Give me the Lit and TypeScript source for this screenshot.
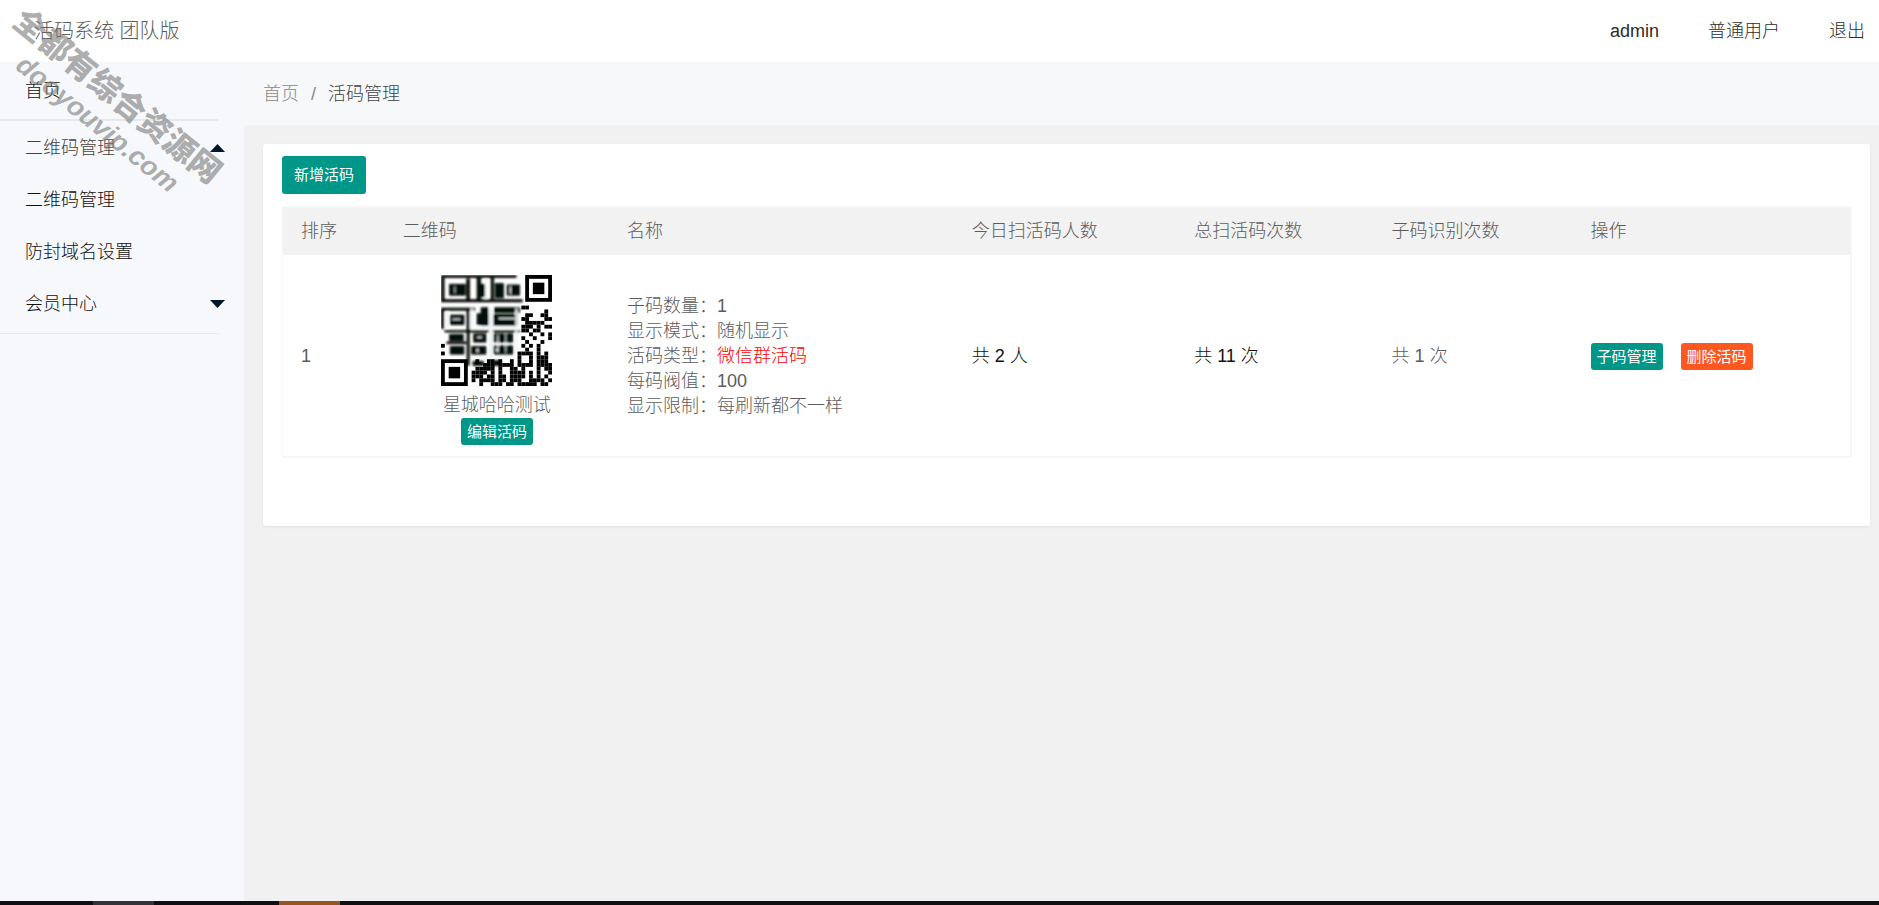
import { LitElement, html, css, svg } from "lit";
import { customElement, state } from "lit/decorators.js";

type Rect = [number, number, number, number];

/** Module size of the code, in drawing units. */
const M = 12;

/** Legible modules along the right and bottom edges, one string per row. */
const MODULES: Record<number, string> = {
  8: ".....................##......",
  9: "...........................#.",
  10: "......................##..##.",
  11: ".....................##....##",
  12: "......................#####..",
  13: ".....................###.#.##",
  14: ".....................##.##...",
  15: ".......................#..#.#",
  16: ".....................#..#...#",
  17: "......................#...#..",
  18: "#....................#.#.#...",
  19: "......................#..#...",
  20: "#...................####.#.#.",
  21: "....................#..#.###.",
  22: ".........#..##.#..#.#..#.###.",
  23: "...........###.####.####.####",
  24: ".........#####.#..##.#...#.##",
  25: "........####.#.#..####.#.#..#",
  26: "........###.##.##.####.#.#.#.",
  27: "........#.####.##.###..####.#",
  28: "..........#..###.##.#####.##.",
};

/** Solid shapes of the smudged upper-left area. */
const DARK: Rect[] = [
  [2, 2, 222, 5], [2, 8, 7, 70], [2, 74, 240, 6], [77, 12, 8, 62],
  [26, 28, 46, 32], [108, 8, 10, 66], [114, 28, 16, 36], [150, 8, 7, 64],
  [162, 26, 24, 42], [198, 30, 36, 30],
  [2, 99, 98, 6], [2, 105, 6, 54], [78, 105, 6, 164], [28, 120, 40, 28],
  [120, 98, 20, 52], [160, 98, 74, 14], [158, 118, 70, 32], [108, 116, 32, 32],
  [12, 166, 222, 4], [26, 178, 40, 18], [98, 176, 36, 24], [158, 176, 56, 24],
  [18, 200, 56, 5], [28, 214, 40, 22], [92, 214, 42, 22], [158, 212, 56, 24],
  [96, 258, 30, 12], [152, 256, 24, 14],
];

/** Light streaks that run over the smudged area. */
const LIGHT: Rect[] = [
  [40, 34, 3, 20], [132, 14, 6, 56], [206, 34, 3, 22], [143, 100, 12, 166],
  [14, 112, 8, 44], [172, 128, 54, 4], [168, 180, 4, 50], [192, 176, 3, 56],
  [108, 184, 14, 4], [106, 220, 6, 10], [222, 100, 7, 140],
  [92, 154, 140, 6], [34, 130, 24, 4], [164, 220, 6, 8], [88, 100, 8, 60],
];

const finder = (x: number, y: number) => svg`
  <rect x=${x} y=${y} width="84" height="84" fill="#000"/>
  <rect x=${x + M} y=${y + M} width="60" height="60" fill="#fff"/>
  <rect x=${x + 2 * M} y=${y + 2 * M} width="36" height="36" fill="#000"/>`;

@customElement("qr-picture")
export class QrPicture extends LitElement {
  static styles = css`
    :host { display: block; width: 111px; height: 111px; }
    .code { display: block; width: 100%; height: 100%; }
  `;

  render() {
    const cells: unknown[] = [];
    for (const [row, line] of Object.entries(MODULES)) {
      [...line].forEach((c, col) => {
        if (c === "#") {
          cells.push(svg`<rect x=${col * M} y=${Number(row) * M} width=${M} height=${M}/>`);
        }
      });
    }
    return html`<svg class="code" viewBox="0 0 348 348" role="img" aria-label="二维码">
      <defs><filter id="soft"><feGaussianBlur stdDeviation="3"/></filter></defs>
      <rect width="348" height="348" fill="#fff"/>
      <g filter="url(#soft)" transform="scale(1.05)">
        ${DARK.map(([x, y, w, h]) => svg`<rect x=${x} y=${y} width=${w} height=${h} fill="#030807" stroke="#030807" stroke-width="3"/>`)}
        ${LIGHT.map(([x, y, w, h]) => svg`<rect x=${x} y=${y} width=${w} height=${h} fill="#eef6f5"/>`)}
      </g>
      <g fill="#000">${cells}</g>
      ${finder(264, 0)}${finder(0, 264)}
    </svg>`;
  }
}

@customElement("app-root")
export class AppRoot extends LitElement {
  @state() private rows = [
    {
      order: 1,
      title: "星城哈哈测试",
      info: [
        ["子码数量", "1"],
        ["显示模式", "随机显示"],
        ["活码类型", "微信群活码"],
        ["每码阀值", "100"],
        ["显示限制", "每刷新都不一样"],
      ],
      today: 2,
      total: 11,
      sub: 1,
    },
  ];

  static styles = css`
    :host {
      display: grid;
      box-sizing: border-box;
      grid-template: auto 1fr auto / 244px 1fr;
      position: relative;
      min-height: 100vh;
      overflow: hidden;
      background: #f1f1f1;
      color: #5c5c5c;
      font: 300 18px/25px "Liberation Sans", "Noto Sans CJK SC", sans-serif;
    }
    a { color: inherit; text-decoration: none; }
    ul { list-style: none; margin: 0; padding: 0; }
    .top {
      grid-column: 1 / -1;
      display: flex;
      align-items: center;
      justify-content: space-between;
      height: 62px;
      padding: 0 14px 0 34px;
      background: #fff;
    }
    .brand { font-size: 20px; }
    .user { display: flex; gap: 49px; color: #2b2b2b; }
    .side { background: #f7f8fb; color: #111; }
    .entry {
      display: flex;
      box-sizing: border-box;
      align-items: center;
      justify-content: space-between;
      height: 52px;
      padding: 2px 19px 0 25px;
    }
    .home { height: 57px; }
    .open { color: #444; }
    .rule { width: 219px; height: 2px; margin: 0; border: 0; background: #e6e7e9; }
    .thin { height: 1px; margin-top: 4px; }
    .arrow { width: 15px; height: 8px; fill: #001529; }
    .crumbs {
      display: flex;
      box-sizing: border-box;
      align-items: center;
      gap: 12px;
      height: 63px;
      padding: 2px 19px 0;
      background: #f7f8fa;
      color: #888;
    }
    .here { color: #444; }
    .body { padding: 19px 9px 19px 19px; }
    .card {
      padding: 12px 18px 68px 19px;
      border-radius: 3px;
      background: #fff;
      box-shadow: 0 1px 3px rgba(0, 0, 0, 0.06);
    }
    .btn {
      display: inline-block;
      border: 0;
      border-radius: 3px;
      padding: 0 6px;
      height: 27px;
      background: #009688;
      color: #fff;
      font: 400 15px/27px "Liberation Sans", "Noto Sans CJK SC", sans-serif;
      cursor: pointer;
    }
    .add { height: 38px; padding: 0 12px; line-height: 38px; }
    .danger { background: #ff5722; }
    .list {
      width: 100%;
      margin-top: 12px;
      table-layout: fixed;
      border-collapse: separate;
      border-spacing: 0;
      border: 2px solid #f6f6f6;
      border-left-width: 1px;
    }
    .list th {
      padding: 11px 18px;
      background: #f2f2f2;
      text-align: left;
      font-weight: 300;
    }
    .list td { padding: 12px 18px 10px; }
    .c-order { width: 6.5%; }
    .c-code { width: 14.3%; }
    .c-name { width: 22%; }
    .c-today { width: 14.2%; }
    .c-count { width: 12.6%; }
    .c-sub { width: 12.7%; }
    .code-cell { display: flex; flex-direction: column; align-items: center; padding: 8px 0 1px; }
    .caption { margin-top: 7px; }
    .hot { color: #f00; }
    .strong { color: #111; }
    .ops { display: flex; gap: 18px; }
    .taskbar { grid-column: 1 / -1; display: flex; gap: 125px; height: 4px; padding-left: 93px; background: #101012; }
    .task { width: 61px; background: #333335; }
    .alert { background: #98541f; }
    .watermark {
      position: absolute;
      top: 1px;
      left: 30px;
      transform: rotate(39deg);
      transform-origin: 0 0;
      pointer-events: none;
      white-space: nowrap;
      color: rgba(120, 120, 120, 0.6);
      font: 900 32px/39px "Liberation Sans", "Noto Sans CJK SC", sans-serif;
    }
    .site { padding-left: 30px; font-size: 27px; font-style: italic; line-height: 28px; }
  `;

  private arrow(up: boolean) {
    return html`<svg class="arrow" viewBox="0 0 15 8" aria-hidden="true">
      <path d=${up ? "M0 8 7.500 0 15 8z" : "M0 0 7.500 8 15 0z"} />
    </svg>`;
  }

  render() {
    return html`
      <header class="top">
        <span class="brand">活码系统 团队版</span>
        <nav class="user">
          <a href="#">admin</a><a href="#">普通用户</a><a href="#">退出</a>
        </nav>
      </header>
      <nav class="side">
        <a class="entry home" href="#">首页</a>
        <hr class="rule" />
        <a class="entry open" href="#">二维码管理 ${this.arrow(true)}</a>
        <a class="entry" href="#">二维码管理</a>
        <a class="entry" href="#">防封域名设置</a>
        <a class="entry" href="#">会员中心 ${this.arrow(false)}</a>
        <hr class="rule thin" />
      </nav>
      <main>
        <div class="crumbs">
          <a href="#">首页</a><span>/</span><span class="here">活码管理</span>
        </div>
        <div class="body">
          <section class="card">
            <button class="btn add">新增活码</button>
            <table class="list">
              <colgroup>
                <col class="c-order" /><col class="c-code" /><col class="c-name" />
                <col class="c-today" /><col class="c-count" /><col class="c-sub" /><col />
              </colgroup>
              <thead>
                <tr>
                  <th>排序</th><th>二维码</th><th>名称</th><th>今日扫活码人数</th>
                  <th>总扫活码次数</th><th>子码识别次数</th><th>操作</th>
                </tr>
              </thead>
              <tbody>
                ${this.rows.map(
                  (r) => html`<tr>
                    <td>${r.order}</td>
                    <td>
                      <div class="code-cell">
                        <qr-picture></qr-picture>
                        <span class="caption">${r.title}</span>
                        <button class="btn">编辑活码</button>
                      </div>
                    </td>
                    <td>
                      <ul>
                        ${r.info.map(
                          ([k, v]) => html`<li>${k}：<span class=${k === "活码类型" ? "hot" : ""}>${v}</span></li>`
                        )}
                      </ul>
                    </td>
                    <td class="strong">共 ${r.today} 人</td>
                    <td class="strong">共 ${r.total} 次</td>
                    <td>共 ${r.sub} 次</td>
                    <td>
                      <div class="ops">
                        <button class="btn">子码管理</button>
                        <button class="btn danger">删除活码</button>
                      </div>
                    </td>
                  </tr>`
                )}
              </tbody>
            </table>
          </section>
        </div>
      </main>
      <footer class="taskbar"><span class="task"></span><span class="task alert"></span></footer>
      <div class="watermark" aria-hidden="true">
        <div>全都有综合资源网</div>
        <div class="site">dooyouvip.com</div>
      </div>
    `;
  }
}
